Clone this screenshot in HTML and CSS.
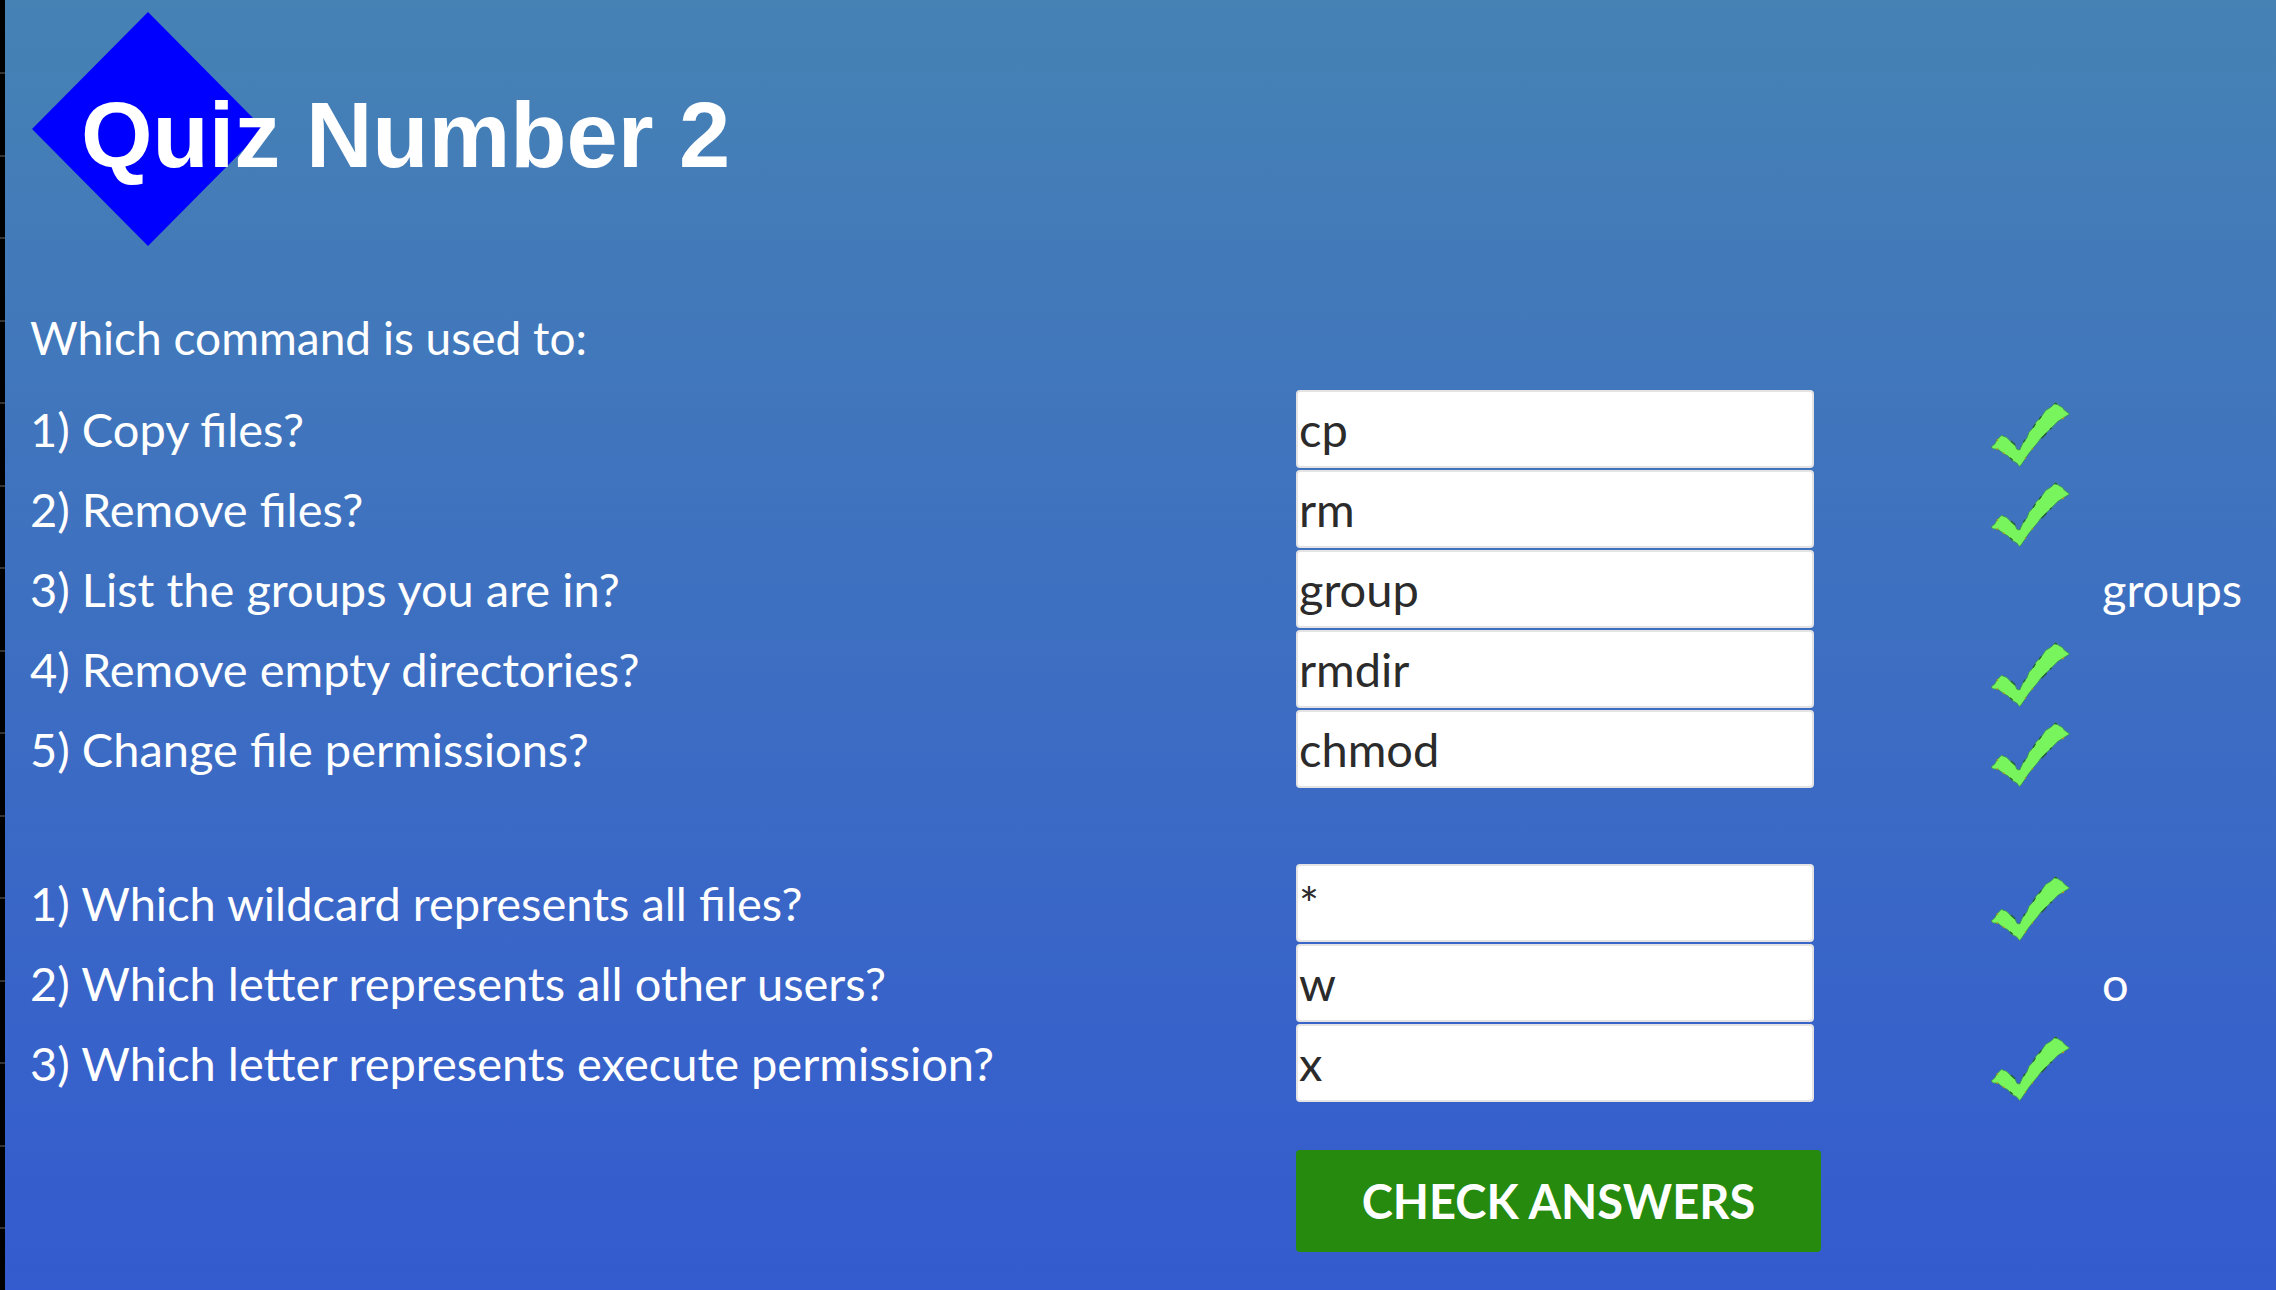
FILE: index.html
```html
<!DOCTYPE html>
<html lang="en">
<head>
<meta charset="utf-8">
<title>Quiz Number 2</title>
<link rel="stylesheet" href="styles.css">
</head>
<body>
<svg class="defs" aria-hidden="true">
  <symbol id="tick" viewBox="58 0 240 234">
    <path d="M61 171 L72 162 L79 149 L92 136 L108 142 L123 157 L133 165 L139 178 L147 180 L157 158 L168 145 L175 127 L189 111 L196 96 L210 83 L225 61 L240 52 L255 38 L264 46 L274 51 L282 61 L297 72 L278 84 L262 94 L243 113 L229 127 L212 143 L201 158 L187 175 L174 191 L163 208 L154 221 L147 230 L138 219 L123 211 L112 198 L97 190 L82 178 L68 177 Z" fill="#78f45c" stroke="#3d8f5c" stroke-width="3"/>
    <path d="M121 153 L134 165 M158 157 L163 149 M187 113 L194 102 M205 88 L212 79 M251 40 L259 42 M213 145 L228 129 M238 118 L244 113 M118 203 L126 211" fill="none" stroke="#275f32" stroke-width="4"/>
    <path d="M78 151 L82 149 M78 177 L82 178 M97 189 L101 190 M163 205 L166 203 M184 177 L187 175 M275 86 L280 84" fill="none" stroke="#b5931c" stroke-width="5"/>
  </symbol>
</svg>
<div class="edge"></div>
<main class="quiz">
  <header class="banner">
    <svg class="diamond" viewBox="0 0 232 234" aria-hidden="true"><path d="M116 0 L232 117 L116 234 L0 117 Z" fill="#0000ff"/></svg>
    <h1 class="title">Quiz Number 2</h1>
  </header>
  <form class="questions">
    <p class="intro">Which command is used to:</p>
    <div class="group">
      <div class="row"><label for="a1">1) Copy files?</label><input id="a1" type="text" value="cp"><svg class="tick" role="img" aria-label="Correct"><use href="#tick"/></svg></div>
      <div class="row"><label for="a2">2) Remove files?</label><input id="a2" type="text" value="rm"><svg class="tick" role="img" aria-label="Correct"><use href="#tick"/></svg></div>
      <div class="row"><label for="a3">3) List the groups you are in?</label><input id="a3" type="text" value="group"><output class="answer" for="a3">groups</output></div>
      <div class="row"><label for="a4">4) Remove empty directories?</label><input id="a4" type="text" value="rmdir"><svg class="tick" role="img" aria-label="Correct"><use href="#tick"/></svg></div>
      <div class="row"><label for="a5">5) Change file permissions?</label><input id="a5" type="text" value="chmod"><svg class="tick" role="img" aria-label="Correct"><use href="#tick"/></svg></div>
    </div>
    <div class="group">
      <div class="row"><label for="b1">1) Which wildcard represents all files?</label><input id="b1" type="text" value="*"><svg class="tick" role="img" aria-label="Correct"><use href="#tick"/></svg></div>
      <div class="row"><label for="b2">2) Which letter represents all other users?</label><input id="b2" type="text" value="w"><output class="answer" for="b2">o</output></div>
      <div class="row"><label for="b3">3) Which letter represents execute permission?</label><input id="b3" type="text" value="x"><svg class="tick" role="img" aria-label="Correct"><use href="#tick"/></svg></div>
    </div>
    <div class="row actions"><button class="check" type="button">CHECK ANSWERS</button></div>
  </form>
</main>
</body>
</html>
```
FILE: styles.css
```css
* {
  box-sizing: border-box;
}

body {
  margin: 0;
  min-height: 100vh;
  display: flex;
  background: linear-gradient(#4682b4, #345bcf);
  color: #fff;
  font: 47px/60px Lato, sans-serif;
}

.defs {
  position: absolute;
  width: 0;
  height: 0;
}

.edge {
  flex: none;
  width: 5px;
  background: repeating-linear-gradient(#000 0 72px, #333 72px 74px, #000 74px 155px, #333 155px 157px, #000 157px 165px);
}

.quiz {
  flex: 1;
  min-width: 0;
  padding: 12px 0 38px 25px;
}

.banner {
  display: grid;
  align-items: center;
  margin-left: 2px;
}

.diamond,
.title {
  grid-area: 1 / 1;
}

.diamond {
  width: 232px;
  height: 234px;
}

.title {
  margin: 0;
  padding: 12px 0 0 49px;
  font: bold 92px/110px "Liberation Sans", Arial, sans-serif;
}

.intro {
  margin: 62px 0 22px;
  font-size: 46px;
}

.group {
  display: grid;
  gap: 2px;
  margin-bottom: 76px;
}

.group + .group {
  margin-bottom: 48px;
}

.row {
  display: grid;
  grid-template-columns: 1266fr 694fr 112fr 174fr;
  align-items: center;
}

.row > * {
  min-width: 0;
}

.row input {
  width: 518px;
  max-width: 100%;
  height: 78px;
  padding: 0 1px;
  border: 2px solid #e4e4e4;
  border-radius: 4px;
  background: #fff;
  color: #2b2b2b;
  font: inherit;
}

.tick {
  width: 80px;
  height: 78px;
}

.answer {
  grid-column: 4;
}

.check {
  grid-column: 2;
  justify-self: start;
  width: 525px;
  max-width: 100%;
  height: 102px;
  border: 0;
  border-radius: 4px;
  background: #258a0e;
  color: #fff;
  font: bold 47px/60px Lato, sans-serif;
}
```
